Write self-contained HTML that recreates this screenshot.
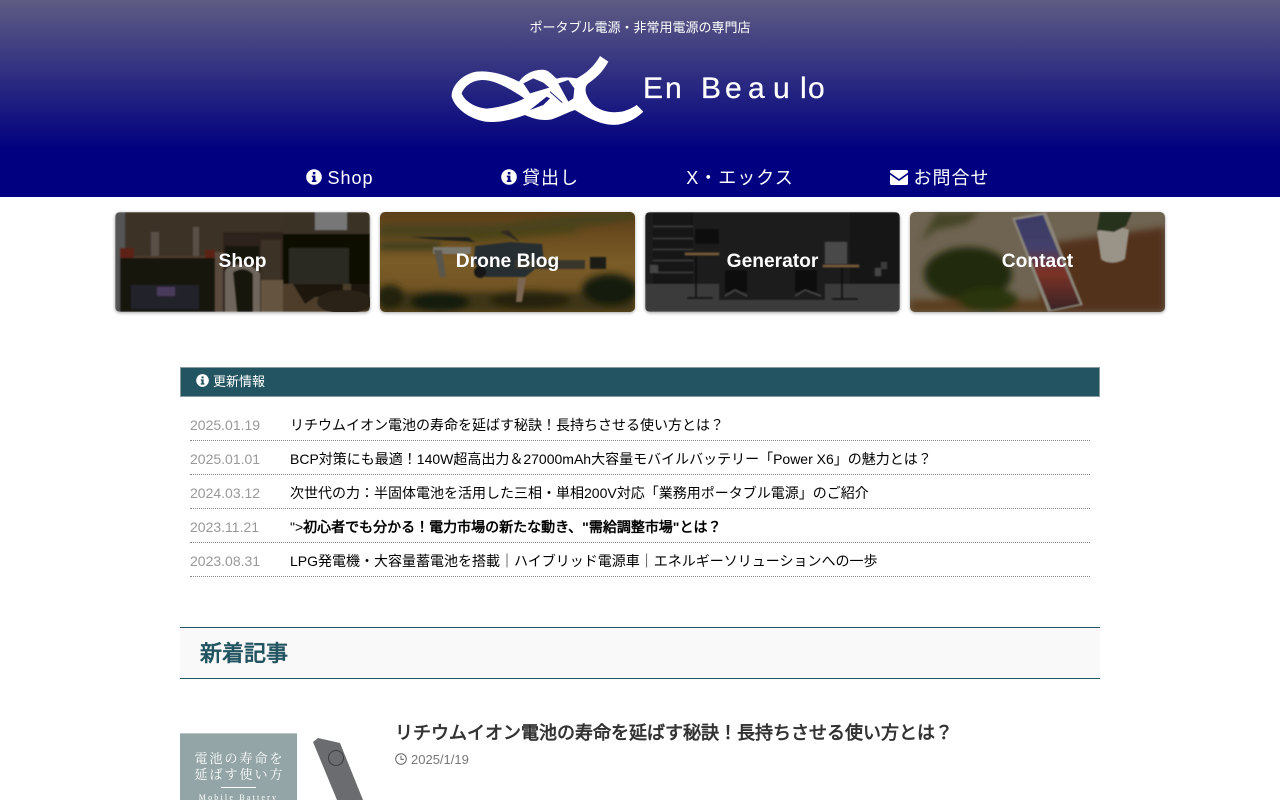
<!DOCTYPE html>
<html lang="ja"><head><meta charset="utf-8"><title>En Beau lo</title>
<style>
*{box-sizing:border-box}
html,body{margin:0;padding:0;background:#fff}
body{width:1280px;height:800px;overflow:hidden;position:relative;font-family:"Liberation Sans","WenQuanYi Zen Hei",sans-serif;color:#000}
.a{position:absolute;white-space:nowrap}
.j{font-family:"Noto Sans CJK JP",sans-serif;line-height:1}
#hd{position:absolute;left:0;top:0;width:1280px;height:197px;background:linear-gradient(180deg,#5e5c82 0,#000080 150px,#000080 197px)}
.nav{position:absolute;top:166px;width:200px;text-align:center;color:#fff;font-size:18px;line-height:24px;letter-spacing:1px}
.nav svg{vertical-align:-1px;margin-right:-1px}
.card{position:absolute;top:212px;width:255px;height:100px;border-radius:5px;overflow:hidden;box-shadow:0 1px 3px rgba(0,0,0,.35)}
.card svg{position:absolute;left:0;top:0}
.card b{position:absolute;left:0;right:0;top:38px;text-align:center;color:#fff;font-size:19.2px;line-height:24px}
.row{position:absolute;left:190px;width:900px;height:34px;border-bottom:1px dotted #888;font-size:14px;line-height:20px}
.row i{position:absolute;left:0;top:8px;font-style:normal;color:#999}
.row span{position:absolute;left:100px;top:8px;white-space:nowrap}
.row span.j{position:static;font-family:"Noto Sans CJK JP",sans-serif}
</style></head><body>
<div id="hd"></div>
<div class="a" style="left:0;width:1280px;top:19px;text-align:center;color:#fff;font-size:13px;line-height:18px">ポータブル電源<span class="j">・</span>非常用電源の専門店</div>
<svg class="a" style="left:445px;top:50px" width="390" height="80" viewBox="0 0 390 80">
<g transform="scale(.33333)">
<path fill="#fff" fill-rule="evenodd" d="M465 18L490 35C478 58 460 80 430 100C416 112 420 135 440 160C465 185 500 190 530 185C550 180 565 172 575 165L595 185C575 205 550 218 520 224C480 228 440 212 390 180C370 186 345 200 320 208C290 214 262 205 240 195C205 208 160 220 120 215C70 205 30 175 20 140C18 110 50 72 95 65C140 60 190 78 222 95C240 70 270 56 300 60C315 64 325 78 335 86C355 80 375 82 395 85C425 70 450 45 465 18Z
M50 130C60 105 85 90 115 90C150 92 185 110 238 145C215 158 165 172 125 176C90 172 60 155 50 130Z
M235 100L265 85L295 98L313 113L255 130Z
M340 100L370 90L388 115L385 145L370 155Z
M255 180L305 140L315 145L295 165Z"/>
<path d="M315 125L352 158" stroke="#262582" stroke-width="3" fill="none"/>
</g>
<text x="198 220 241 256 280 303 328 351 355 363" y="48" font-family="Liberation Sans" font-size="30" fill="#fff" stroke="#fff" stroke-width=".25">En Beau lo</text>
</svg>

<div class="nav" style="left:240px"><svg width="16" height="16" viewBox="0 0 16 16"><circle cx="8" cy="8" r="7.8" fill="#fff"/><rect x="6.8" y="3" width="2.6" height="2.4" fill="#000080"/><path d="M5.8 6.6H9.4V11.4H10.4V13H5.8V11.4H6.8V8.2H5.8Z" fill="#000080"/></svg> Shop</div>
<div class="nav" style="left:440px"><svg width="16" height="16" viewBox="0 0 16 16"><circle cx="8" cy="8" r="7.8" fill="#fff"/><rect x="6.8" y="3" width="2.6" height="2.4" fill="#000080"/><path d="M5.8 6.6H9.4V11.4H10.4V13H5.8V11.4H6.8V8.2H5.8Z" fill="#000080"/></svg> 貸出し</div>
<div class="nav" style="left:640px">X<span class="j">・</span>エックス</div>
<div class="nav" style="left:840px"><svg width="18" height="15" viewBox="0 0 18 15"><path d="M1.5 0H16.5A1.5 1.5 0 0 1 18 1.5V2.6L9 9 0 2.6V1.5A1.5 1.5 0 0 1 1.5 0Z" fill="#fff"/><path d="M0 4.6L9 11 18 4.6V13.5A1.5 1.5 0 0 1 16.5 15H1.5A1.5 1.5 0 0 1 0 13.5Z" fill="#fff"/></svg> お問合せ</div>

<div class="card" style="left:115px"><svg width="255" height="100" viewBox="0 0 255 100"><defs><filter id="b1"><feGaussianBlur stdDeviation=".9"/></filter></defs><g filter="url(#b1)">
<rect width="255" height="100" fill="#3c3228"/><rect width="10" height="100" fill="#555"/><rect x="168" y="0" width="87" height="22" fill="#3a3028"/><rect x="200" y="0" width="32" height="18" fill="#777"/>
<rect x="36" y="20" width="8" height="25" fill="#5a5046"/><rect x="78" y="15" width="6" height="30" fill="#5a5046"/><rect x="18" y="44" width="84" height="8" fill="#4e3a2a"/>
<rect x="5" y="46" width="95" height="54" fill="#151210"/><rect x="5" y="36" width="14" height="10" fill="#5c2418"/><rect x="90" y="38" width="10" height="8" fill="#5c2418"/>
<rect x="16" y="73" width="68" height="24" fill="#24242a"/><rect x="42" y="75" width="18" height="9" fill="#4a3a5c"/>
<rect x="100" y="40" width="8" height="60" fill="#5a4a3c"/>
<rect x="108" y="20" width="60" height="80" fill="#2e241c"/><rect x="110" y="34" width="34" height="16" fill="#151210"/><rect x="146" y="28" width="20" height="40" fill="#3c3026"/><path d="M110 60C112 50 140 50 145 62V100H110Z" fill="#6e665c"/><path d="M118 60C126 56 132 56 138 62V100H122Z" fill="#18140f"/><rect x="146" y="68" width="22" height="32" fill="#65543f"/>
<rect x="168" y="22" width="87" height="50" fill="#080706"/><rect x="174" y="36" width="60" height="36" fill="#2c2c24"/><rect x="168" y="72" width="87" height="28" fill="#4e3c2a"/><path d="M178 72H255V85H200L190 92Z" fill="#1e1710"/><ellipse cx="230" cy="90" rx="28" ry="12" fill="#2a2017"/><rect x="228" y="72" width="8" height="6" fill="#4a3c2c"/>
</g></svg><b>Shop</b></div>

<div class="card" style="left:380px"><svg width="255" height="100" viewBox="0 0 255 100"><defs><filter id="b2"><feGaussianBlur stdDeviation="3.5"/></filter><filter id="b2s"><feGaussianBlur stdDeviation=".8"/></filter><linearGradient id="g2" x1="0" y1="0" x2="0" y2="1"><stop offset="0" stop-color="#5c3e18"/><stop offset=".5" stop-color="#7a5c28"/><stop offset="1" stop-color="#6a4e20"/></linearGradient></defs>
<rect width="255" height="100" fill="url(#g2)"/><g filter="url(#b2)"><path d="M0 12H120L210 0H255V8L120 25H0Z" fill="#4a421a"/><path d="M0 30H60V38H0Z" fill="#3e3e1a"/><path d="M90 22L190 15 200 20 90 30Z" fill="#4c4418"/><path d="M0 80H255V100H0Z" fill="#3e3414"/><ellipse cx="60" cy="90" rx="30" ry="10" fill="#171c0c"/><ellipse cx="150" cy="88" rx="40" ry="9" fill="#26220c"/><ellipse cx="230" cy="78" rx="28" ry="16" fill="#171c0c"/><ellipse cx="10" cy="85" rx="14" ry="12" fill="#20200b"/></g>
<g filter="url(#b2s)"><path d="M30 25L88 25 95 30 60 28Z" fill="#24221a"/><rect x="53" y="35" width="38" height="7" fill="#7a786e"/><path d="M54 38L62 38 66 65 60 65Z" fill="#5a564c"/><path d="M95 34L130 30 162 32 164 50 145 65H105L94 50Z" fill="#282e30"/><ellipse cx="100" cy="60" rx="6" ry="6" fill="#141614"/><rect x="135" y="48" width="70" height="9" fill="#38362c"/><rect x="210" y="45" width="16" height="12" fill="#1a1a16"/><path d="M138 66H146L142 90H136Z" fill="#7a6652"/><path d="M120 20L140 30 128 18Z" fill="#302c22"/></g></svg><b>Drone Blog</b></div>

<div class="card" style="left:645px"><svg width="255" height="100" viewBox="0 0 255 100"><defs><filter id="b3"><feGaussianBlur stdDeviation=".7"/></filter></defs><g filter="url(#b3)">
<rect width="255" height="100" fill="#1d1d1d"/><rect y="72" width="255" height="28" fill="#3a3a3a"/><rect x="8" y="0" width="40" height="72" fill="#161616"/><rect x="205" y="0" width="50" height="72" fill="#121212"/>
<rect x="8" y="14" width="40" height="1" fill="#444"/><rect x="8" y="26" width="40" height="1" fill="#444"/><rect x="8" y="37" width="40" height="1" fill="#444"/><rect x="8" y="48" width="40" height="1" fill="#444"/><rect x="8" y="60" width="40" height="1" fill="#444"/>
<rect x="50" y="17" width="24" height="15" fill="#0a0a0a"/><rect x="40" y="41" width="34" height="2" fill="#7a5e3c"/><rect x="50" y="43" width="2" height="43" fill="#0e0e0e"/><rect x="42" y="85" width="26" height="2" fill="#0a0a0a"/>
<rect x="180" y="30" width="22" height="22" fill="#4a4a4a"/><rect x="178" y="53" width="36" height="2" fill="#7a5e3c"/><rect x="196" y="55" width="2" height="31" fill="#0e0e0e"/><rect x="187" y="86" width="26" height="2" fill="#0a0a0a"/>
<rect x="74" y="60" width="106" height="28" fill="#1a1a1a"/><rect x="80" y="58" width="22" height="22" fill="#101010"/><rect x="150" y="58" width="22" height="22" fill="#101010"/>
<path d="M80 84L90 78 102 84M150 84L160 78 176 84" stroke="#555" fill="none"/>
<rect x="5" y="53" width="8" height="8" fill="#444"/><rect x="236" y="50" width="6" height="7" fill="#3a3a3a"/><rect x="230" y="56" width="6" height="8" fill="#444"/></g></svg><b>Generator</b></div>

<div class="card" style="left:910px"><svg width="255" height="100" viewBox="0 0 255 100"><defs><filter id="b4"><feGaussianBlur stdDeviation="3.5"/></filter><filter id="b4s"><feGaussianBlur stdDeviation=".7"/></filter><linearGradient id="g4" x1="0" y1="0" x2="0" y2="1"><stop offset="0" stop-color="#3a3a66"/><stop offset=".35" stop-color="#44406a"/><stop offset=".6" stop-color="#7c3226"/><stop offset="1" stop-color="#3a2428"/></linearGradient></defs>
<rect width="255" height="100" fill="#6f6452"/><g filter="url(#b4)"><path d="M135 32L255 15V100H130Z" fill="#53331a"/><rect x="0" y="88" width="135" height="12" fill="#5a3c1c"/><path d="M27 0H70L55 12 25 18 10 30Z" fill="#454526"/><ellipse cx="58" cy="62" rx="44" ry="27" fill="#222c0e"/><ellipse cx="78" cy="88" rx="30" ry="12" fill="#2c3410"/></g>
<g filter="url(#b4s)"><path d="M102 6L136 0 173 93 138 100Z" fill="#8a8478"/><path d="M105 8L133 3 170 92 141 98Z" fill="url(#g4)"/><path d="M187 20C195 14 212 14 219 18L215 47C208 52 196 52 191 47Z" fill="#9a9488"/><path d="M187 18L190 0H222L216 14 204 20Z" fill="#25301a"/></g></svg><b>Contact</b></div>

<div class="a" style="left:180px;top:367px;width:920px;height:30px;background:#225561;border:1px solid #8a9a9e"></div>
<svg class="a" style="left:196px;top:374px" width="13" height="13" viewBox="0 0 16 16"><circle cx="8" cy="8" r="7.8" fill="#fff"/><rect x="6.8" y="3" width="2.6" height="2.4" fill="#225561"/><path d="M5.8 6.6H9.4V11.4H10.4V13H5.8V11.4H6.8V8.2H5.8Z" fill="#225561"/></svg>
<div class="a" style="left:213px;top:373px;color:#fff;font-size:13px;line-height:18px">更新情報</div>

<div class="row" style="top:407px"><i>2025.01.19</i><span>リチウムイオン電池の寿命を延ばす秘訣！長持ちさせる使い方とは？</span></div>
<div class="row" style="top:441px"><i>2025.01.01</i><span>BCP対策にも最適！140W超高出力＆27000mAh大容量モバイルバッテリー「Power X6」の魅力とは？</span></div>
<div class="row" style="top:475px"><i>2024.03.12</i><span>次世代の力<span class="j">：</span>半固体電池を活用した三相<span class="j">・</span>単相200V対応「業務用ポータブル電源」のご紹介</span></div>
<div class="row" style="top:509px"><i>2023.11.21</i><span>"&gt;<b>初心者でも分かる！電力市場の新たな動き、"需給調整市場"とは？</b></span></div>
<div class="row" style="top:543px"><i>2023.08.31</i><span>LPG発電機<span class="j">・</span>大容量蓄電池を搭載｜ハイブリッド電源車｜エネルギーソリューションへの一歩</span></div>

<div class="a" style="left:180px;top:627px;width:920px;height:52px;background:#f9f9f9;border-top:1px solid #225561;border-bottom:1px solid #225561;padding-left:20px;font-size:22px;font-weight:bold;line-height:51px;color:#225561">新着記事</div>

<div class="a" style="left:180px;top:733px;width:117px;height:67px;background:#93a5a6;border-top:1px solid #b8c6c6;color:#fff;overflow:hidden;font-family:'Liberation Serif','Noto Serif CJK SC',serif;text-align:center">
<div style="position:absolute;left:1px;width:117px;top:17px;font-size:13px;line-height:16px;letter-spacing:2px">電池の寿命を<br>延ばす使い方</div>
<div style="position:absolute;left:41px;top:53px;width:35px;height:1px;background:#fff"></div>
<div style="position:absolute;left:0;width:117px;top:59px;font-size:8px;line-height:10px;letter-spacing:2.2px">Mobile Battery</div></div>
<svg class="a" style="left:300px;top:730px" width="80" height="70" viewBox="0 0 80 70"><path d="M13 12L18 8 40 13 63 70H37Z" fill="#6a6c70"/><circle cx="36" cy="28" r="7.5" fill="none" stroke="#3a3c40"/></svg>

<div class="a" style="left:395px;top:721px;font-size:18px;font-weight:bold;color:#333;line-height:24px">リチウムイオン電池の寿命を延ばす秘訣！長持ちさせる使い方とは？</div>
<svg class="a" style="left:395px;top:753px" width="12" height="12" viewBox="0 0 12 12" fill="none" stroke="#666" stroke-width="1"><circle cx="6" cy="6" r="5.3"/><path d="M6 2.8V6.4H9"/></svg>
<div class="a" style="left:411px;top:751px;font-size:13px;color:#777;line-height:18px">2025/1/19</div>
</body></html>
